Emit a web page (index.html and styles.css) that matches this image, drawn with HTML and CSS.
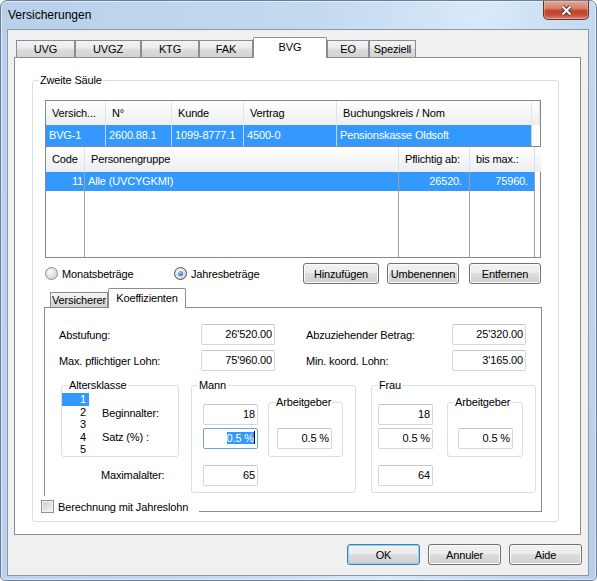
FILE: index.html
```html
<!DOCTYPE html>
<html lang="de">
<head>
  <meta charset="UTF-8">
  <title>Versicherungen</title>
  <link rel="stylesheet" href="styles.css">
</head>
<body>
  <div class="window">
    <div class="titlebar">
      <span class="title">Versicherungen</span>
      <button class="close" aria-label="Schliessen">
        <svg width="13" height="11" viewBox="0 0 13 11">
          <path d="M2.5 1.5l8 8M10.5 1.5l-8 8" stroke="#4a3a38" stroke-width="4" fill="none"/>
          <path d="M2.5 1.5l8 8M10.5 1.5l-8 8" stroke="#fff" stroke-width="2" fill="none"/>
        </svg>
      </button>
    </div>

    <div class="client">
      <div class="tabs">
        <div class="tab tab-uvg">UVG</div>
        <div class="tab tab-uvgz">UVGZ</div>
        <div class="tab tab-ktg">KTG</div>
        <div class="tab tab-fak">FAK</div>
        <div class="tab tab-bvg active">BVG</div>
        <div class="tab tab-eo">EO</div>
        <div class="tab tab-spez">Speziell</div>
      </div>

      <div class="tabpanel">
        <div class="group main-group">
          <span class="group-title">Zweite Säule</span>

          <div class="list list-contracts">
            <div class="th">Versich...</div>
            <div class="th">N°</div>
            <div class="th">Kunde</div>
            <div class="th">Vertrag</div>
            <div class="th">Buchungskreis / Nom</div>
            <div class="th"></div>
            <div class="td sel">BVG-1</div>
            <div class="td sel">2600.88.1</div>
            <div class="td sel">1099-8777.1</div>
            <div class="td sel">4500-0</div>
            <div class="td sel">Pensionskasse Oldsoft</div>
            <div class="td"></div>
          </div>

          <div class="list list-groups">
            <div class="col c-code">
              <div class="th">Code</div>
              <div class="col-body"><div class="td sel num">11</div></div>
            </div>
            <div class="col c-group">
              <div class="th">Personengruppe</div>
              <div class="col-body"><div class="td sel">Alle (UVCYGKMI)</div></div>
            </div>
            <div class="col c-from">
              <div class="th">Pflichtig ab:</div>
              <div class="col-body"><div class="td sel num">26520.</div></div>
            </div>
            <div class="col c-max">
              <div class="th">bis max.:</div>
              <div class="col-body"><div class="td sel num">75960.</div></div>
            </div>
            <div class="col c-fill">
              <div class="th"></div>
              <div class="col-body"></div>
            </div>
          </div>

          <div class="options">
            <label class="radio-item first"><span class="radio"></span>Monatsbeträge</label>
            <label class="radio-item"><span class="radio checked"></span>Jahresbeträge</label>
            <button class="btn btn-add">Hinzufügen</button>
            <button class="btn btn-rename">Umbenennen</button>
            <button class="btn btn-remove">Entfernen</button>
          </div>

          <div class="subtabs">
            <div class="subtab tab-versicherer">Versicherer</div>
            <div class="subtab tab-koeff active">Koeffizienten</div>
          </div>

          <div class="subpanel">
            <div class="fields">
              <span>Abstufung:</span>
              <span class="field">26'520.00</span>
              <span class="label-right">Abzuziehender Betrag:</span>
              <span class="field">25'320.00</span>
              <span>Max. pflichtiger Lohn:</span>
              <span class="field">75'960.00</span>
              <span class="label-right">Min. koord. Lohn:</span>
              <span class="field">3'165.00</span>
            </div>

            <div class="groups">
              <div class="age-col">
                <div class="group age-group">
                  <span class="group-title">Altersklasse</span>
                  <div class="age-list">
                    <div class="sel">1</div>
                    <div>2</div>
                    <div>3</div>
                    <div>4</div>
                    <div>5</div>
                  </div>
                  <div class="age-labels">
                    <span>Beginnalter:</span>
                    <span>Satz (%) :</span>
                  </div>
                </div>
                <div class="max-label">Maximalalter:</div>
              </div>

              <div class="group sex-group">
                <span class="group-title">Mann</span>
                <div class="sex-inputs">
                  <span class="field">18</span>
                  <span class="field focus"><span class="selection">0.5 %</span><span class="caret"></span></span>
                  <span class="field max">65</span>
                </div>
                <div class="group employer">
                  <span class="group-title">Arbeitgeber</span>
                  <span class="field">0.5 %</span>
                </div>
              </div>

              <div class="group sex-group frau">
                <span class="group-title">Frau</span>
                <div class="sex-inputs">
                  <span class="field">18</span>
                  <span class="field">0.5 %</span>
                  <span class="field max">64</span>
                </div>
                <div class="group employer">
                  <span class="group-title">Arbeitgeber</span>
                  <span class="field">0.5 %</span>
                </div>
              </div>
            </div>
          </div>

          <label class="check"><span class="checkbox"></span>Berechnung mit Jahreslohn</label>
        </div>
      </div>

      <div class="dialog-buttons">
        <button class="btn btn-default">OK</button>
        <button class="btn">Annuler</button>
        <button class="btn">Aide</button>
      </div>
    </div>
  </div>
</body>
</html>
```

FILE: styles.css
```css
* {
  box-sizing: border-box;
}

body {
  margin: 0;
  font-family: "Liberation Sans", Arial, sans-serif;
  font-size: 11px;
  letter-spacing: -0.15px;
  color: #000;
  background: #fff;
}

/* window frame */

.window {
  width: 597px;
  height: 581px;
  border: 1px solid #6a7d94;
  border-radius: 7px 7px 5px 5px;
  background: linear-gradient(100deg, #b8d0ea 0%, #c3d9f0 45%, #d8e9f9 70%, #c0d7ef 88%, #b6cfe9 100%);
  box-shadow: inset 0 0 0 1px rgba(255, 255, 255, 0.55);
  overflow: hidden;
}

.titlebar {
  height: 28px;
  display: flex;
  align-items: flex-start;
  justify-content: space-between;
  padding: 0 7px;
}

.title {
  font-size: 12px;
  letter-spacing: 0;
  line-height: 28px;
}

.close {
  width: 46px;
  height: 19px;
  padding: 0;
  border: 1px solid #6b2f27;
  border-top: none;
  border-radius: 0 0 5px 5px;
  background: linear-gradient(#e8a897, #d7806c 40%, #c3432d 55%, #c64a33 75%, #d98a74);
  box-shadow: inset 0 0 0 1px rgba(255, 220, 210, 0.35);
  display: flex;
  align-items: center;
  justify-content: center;
}

.client {
  margin: 0 7px 0 6px;
  height: 547px;
  background: #f0f0f0;
  border: 1px solid #8a98a8;
}

/* main tabs */

.tabs {
  display: flex;
  align-items: flex-end;
  height: 21px;
  margin: 7px 0 -1px 8px;
}

.tab,
.subtab {
  border: 1px solid #898c95;
  border-bottom: none;
  background: linear-gradient(#f3f3f3, #ebebeb 45%, #dedede 50%, #d2d2d2);
  text-align: center;
  white-space: nowrap;
}

.tab {
  height: 17px;
  margin-bottom: 1px;
  line-height: 16px;
}

.tab.active,
.subtab.active {
  position: relative;
  z-index: 1;
  margin-bottom: 0;
  background: #fff;
  border-radius: 2px 2px 0 0;
}

.tab.active {
  height: 21px;
  line-height: 19px;
}

.tab-uvg { width: 59px; }
.tab-uvgz { width: 66px; }
.tab-ktg { width: 58px; }
.tab-fak { width: 54px; }
.tab-bvg { width: 74px; }
.tab-eo { width: 42px; }
.tab-spez { width: 47px; }

.tabpanel {
  margin-left: 6px;
  width: 567px;
  height: 478px;
  border: 1px solid #898c95;
  background: #fff;
}

/* group boxes */

.group {
  position: relative;
  border: 1px solid #d5dfe5;
  border-radius: 3px;
}

.group-title {
  position: absolute;
  top: -7px;
  left: 6px;
  padding: 0 1px;
  line-height: 13px;
  background: #fff;
  white-space: nowrap;
}

.main-group {
  margin: 22px 0 0 17px;
  width: 527px;
  height: 442px;
}

/* list views */

.list {
  margin-left: 12px;
  width: 496px;
  border: 1px solid #828790;
  background: #fff;
}

.th {
  background: linear-gradient(#ffffff, #f5f6f7 50%, #eceef1);
  border-right: 1px solid #dfe2e6;
  padding-left: 6px;
  white-space: nowrap;
  overflow: hidden;
}

.td {
  white-space: nowrap;
  overflow: hidden;
}

.sel {
  background: #3399ff;
  color: #fff;
}

.list-contracts {
  margin-top: 19px;
  display: grid;
  grid-template-columns: 60px 66px 72px 93px 195px 8px;
  grid-template-rows: 24px 21px;
}

.list-contracts .th {
  line-height: 24px;
}

.list-contracts .td {
  line-height: 21px;
  padding-left: 3px;
}

.list-contracts .td.sel {
  border-right: 1px solid #c4d5e8;
}

.list-groups {
  display: flex;
  height: 111px;
  border-top: none;
}

.col {
  display: flex;
  flex-direction: column;
}

.col .th {
  height: 25px;
  line-height: 25px;
}

.col-body {
  flex: 1;
  border-right: 1px solid #a0a0a0;
}

.col-body .td {
  height: 19px;
  line-height: 19px;
  padding-left: 3px;
}

.col-body .num {
  text-align: right;
  padding-left: 0;
}

.c-code { width: 39px; }
.c-group { width: 314px; }
.c-from { width: 71px; }
.c-max { width: 65px; }
.c-fill { width: 5px; }

.c-fill .th,
.c-fill .col-body {
  border-right: none;
}

.c-code .num { padding-right: 1px; }
.c-from .num { padding-right: 7px; }
.c-max .num { padding-right: 6px; }

/* radios and buttons */

.options {
  display: flex;
  align-items: center;
  height: 21px;
  margin-top: 5px;
  padding: 0 17px 0 12px;
}

.radio-item {
  display: flex;
  align-items: center;
  gap: 4px;
}

.radio-item.first {
  width: 129px;
}

.radio {
  position: relative;
  flex: none;
  width: 13px;
  height: 13px;
  border: 1px solid #8a8b8c;
  border-radius: 50%;
  background: radial-gradient(circle at 40% 35%, #fafafa, #dadada 65%, #c6c6c6);
}

.radio.checked {
  border-color: #4b4d50;
}

.radio.checked::after {
  content: "";
  position: absolute;
  left: 3px;
  top: 3px;
  width: 5px;
  height: 5px;
  border-radius: 50%;
  background: radial-gradient(circle at 40% 35%, #9be0ff, #2a74c4 70%, #1b4f95);
}

.btn {
  height: 21px;
  padding: 0;
  border: 1px solid #707070;
  border-radius: 3px;
  background: linear-gradient(#f2f2f2, #ebebeb 50%, #dddddd 50%, #cfcfcf);
  box-shadow: inset 0 0 0 1px #fbfbfb;
  font: inherit;
  letter-spacing: inherit;
  color: #000;
}

.btn-add {
  margin-left: auto;
  width: 76px;
}

.btn-rename {
  margin-left: 8px;
  width: 72px;
}

.btn-remove {
  margin-left: 10px;
  width: 72px;
}

/* sub tabs */

.subtabs {
  display: flex;
  align-items: flex-end;
  height: 20px;
  margin: 4px 0 -1px 17px;
}

.subtab {
  height: 15px;
  margin-bottom: 1px;
  line-height: 14px;
}

.subtab.active {
  height: 20px;
  line-height: 18px;
}

.tab-versicherer { width: 58px; }
.tab-koeff { width: 78px; }

.subpanel {
  margin-left: 11px;
  width: 498px;
  height: 205px;
  border: 1px solid #898c95;
  background: #fff;
}

/* fields */

.fields {
  display: grid;
  grid-template-columns: 142px 74px 177px 74px;
  grid-auto-rows: 21px;
  row-gap: 5px;
  align-items: center;
  margin-top: 16px;
  padding-left: 14px;
}

.label-right {
  padding-left: 31px;
}

.field {
  display: block;
  height: 21px;
  padding-right: 2px;
  border: 1px solid #d3d7dc;
  border-top-color: #c4c8cd;
  border-radius: 2px;
  background: #fff;
  line-height: 19px;
  text-align: right;
  white-space: nowrap;
}

.field.focus {
  border-color: #6ea5dc;
}

.selection {
  background: #3399ff;
  color: #fff;
}

.caret {
  display: inline-block;
  width: 1px;
  height: 13px;
  vertical-align: -2px;
  background: #000;
}

.groups {
  display: flex;
  align-items: flex-start;
  margin-top: 14px;
  padding-left: 16px;
}

.age-col {
  width: 118px;
}

.age-group {
  display: flex;
  height: 72px;
}

.age-list {
  margin-top: 7px;
  width: 27px;
}

.age-list div {
  height: 12.5px;
  line-height: 12.5px;
  padding-right: 3px;
  text-align: right;
}

.age-labels {
  display: flex;
  flex-direction: column;
  gap: 3px;
  margin-left: 13px;
  padding-top: 17px;
}

.age-labels span {
  line-height: 21px;
}

.max-label {
  margin-top: 8px;
  padding-left: 40px;
  line-height: 21px;
}

.sex-group {
  display: flex;
  width: 165px;
  height: 108px;
  margin-left: 12px;
}

.sex-group.frau {
  margin-left: 15px;
}

.sex-inputs {
  display: flex;
  flex-direction: column;
  gap: 3px;
  width: 55px;
  margin-left: 11px;
  padding-top: 18px;
  box-sizing: content-box;
}

.frau .sex-inputs {
  margin-left: 6px;
}

.sex-inputs .max {
  margin-top: 13px;
}

.employer {
  width: 75px;
  height: 55px;
  margin: 16px 0 0 10px;
  padding: 25px 0 0 8px;
}

.frau .employer {
  width: 76px;
  margin-left: 14px;
  padding-left: 10px;
}

.employer .field {
  width: 55px;
}

/* checkbox lying over the sub panel border */

.check {
  position: absolute;
  left: 6px;
  top: 415px;
  width: 160px;
  height: 21px;
  display: flex;
  align-items: center;
  gap: 4px;
  padding-left: 2px;
  background: #fff;
}

.checkbox {
  flex: none;
  width: 13px;
  height: 13px;
  border: 1px solid #8e8f8f;
  background: linear-gradient(135deg, #c8ccd2, #f6f6f6);
  box-shadow: inset 0 0 0 1px #f2f2f2;
}

/* dialog buttons */

.dialog-buttons {
  display: flex;
  justify-content: flex-end;
  gap: 8px;
  margin-top: 9px;
  padding-right: 6px;
}

.dialog-buttons .btn {
  width: 73px;
}

.btn-default {
  border-color: #3c7fb1;
  box-shadow: inset 0 0 0 1px #8fd3f5;
}
```
